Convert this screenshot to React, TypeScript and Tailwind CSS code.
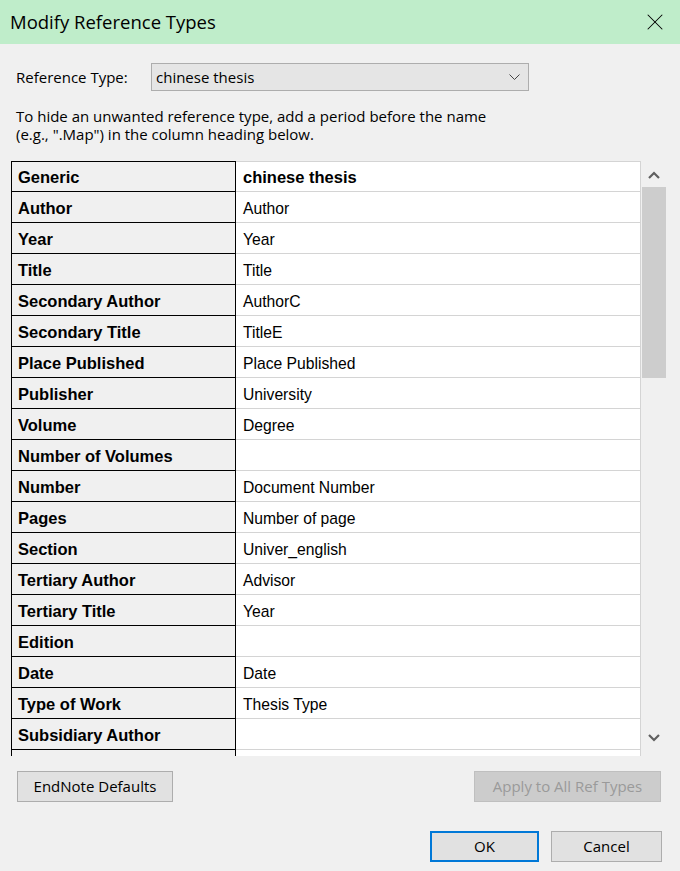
import { X } from "lucide-react";

const ROWS: [string, string][] = [
  ["Generic", "chinese thesis"],
  ["Author", "Author"],
  ["Year", "Year"],
  ["Title", "Title"],
  ["Secondary Author", "AuthorC"],
  ["Secondary Title", "TitleE"],
  ["Place Published", "Place Published"],
  ["Publisher", "University"],
  ["Volume", "Degree"],
  ["Number of Volumes", ""],
  ["Number", "Document Number"],
  ["Pages", "Number of page"],
  ["Section", "Univer_english"],
  ["Tertiary Author", "Advisor"],
  ["Tertiary Title", "Year"],
  ["Edition", ""],
  ["Date", "Date"],
  ["Type of Work", "Thesis Type"],
  ["Subsidiary Author", ""],
  ["", ""],
];

const ui = "font-['Segoe_UI','Open_Sans',sans-serif]";

function Chevron({ up }: { up?: boolean }) {
  return (
    <svg width="12" height="8" viewBox="0 0 12 8" className="block">
      <path
        d={up ? "M1 7 L6 2 L11 7" : "M1 1 L6 6 L11 1"}
        fill="none"
        stroke="#606060"
        strokeWidth="2.2"
      />
    </svg>
  );
}

export default function App() {
  return (
    <div className={`flex h-[871px] w-[680px] flex-col overflow-hidden bg-[#f0f0f0] text-black ${ui}`}>
      <div className="flex h-[44px] shrink-0 items-center justify-between bg-[#bfedca] pl-[10px] pr-[11px]">
        <span className="text-[18.5px] leading-none">Modify Reference Types</span>
        <X className="h-[28px] w-[28px]" strokeWidth={0.9} />
      </div>

      <div className="flex items-center pl-[16px] pt-[19px]">
        <span className="w-[135px] text-[15px]">Reference Type:</span>
        <div className="flex h-[28px] w-[378px] items-center justify-between border border-[#adadad] bg-[#e5e5e5] pl-[4px] pr-[8px] text-[15px]">
          <span>chinese thesis</span>
          <svg width="11" height="6" viewBox="0 0 11 6">
            <path d="M0.5 0.5 L5.5 5.5 L10.5 0.5" fill="none" stroke="#444" strokeWidth="1" />
          </svg>
        </div>
      </div>

      <p className="pl-[16px] pt-[16px] text-[15px] leading-[18px]">
        To hide an unwanted reference type, add a period before the name
        <br />
        (e.g., ".Map") in the column heading below.
      </p>

      <div className="flex pl-[11px] pt-[18px]">
        <div className="h-[595px] w-[630px] overflow-hidden font-['Liberation_Sans',Arial,sans-serif] text-[15.7px]">
          {ROWS.map(([field, name], i) => (
            <div key={i} className="flex h-[31px]">
              <div
                className={`flex w-[225px] items-center border-x border-b border-black bg-[#f0f0f0] pl-[6px] pt-[2px] text-[16.5px] font-bold ${i === 0 ? "border-t" : ""}`}
              >
                {field}
              </div>
              <div
                className={`flex flex-1 items-center border-r border-b border-[#d4d4d4] bg-white pl-[7px] ${i === 0 ? "border-t pt-[2px] text-[16.5px] font-bold" : "pt-[4px]"}`}
              >
                {name}
              </div>
            </div>
          ))}
        </div>
        <div className="ml-[1px] flex h-[595px] w-[24px] flex-col items-center">
          <div className="flex h-[26px] items-center justify-center pt-[2px]">
            <Chevron up />
          </div>
          <div className="h-[191px] w-[24px] bg-[#cdcdcd]" />
          <div className="flex-1" />
          <div className="flex h-[26px] items-center justify-center pb-[10px]">
            <Chevron />
          </div>
        </div>
      </div>

      <div className="flex justify-between pl-[17px] pr-[19px] pt-[15px] text-[15px]">
        <button className="h-[31px] w-[156px] border border-[#adadad] bg-[#e1e1e1]">EndNote Defaults</button>
        <button className="h-[31px] w-[187px] border border-[#bfbfbf] bg-[#cccccc] text-[#9a9a9a]">
          Apply to All Ref Types
        </button>
      </div>

      <div className="flex justify-end gap-[12px] pr-[18px] pt-[29px] text-[15px]">
        <button className="h-[31px] w-[109px] border-2 border-[#0078d7] bg-[#e1e1e1]">OK</button>
        <button className="h-[31px] w-[111px] border border-[#adadad] bg-[#e1e1e1]">Cancel</button>
      </div>
    </div>
  );
}
